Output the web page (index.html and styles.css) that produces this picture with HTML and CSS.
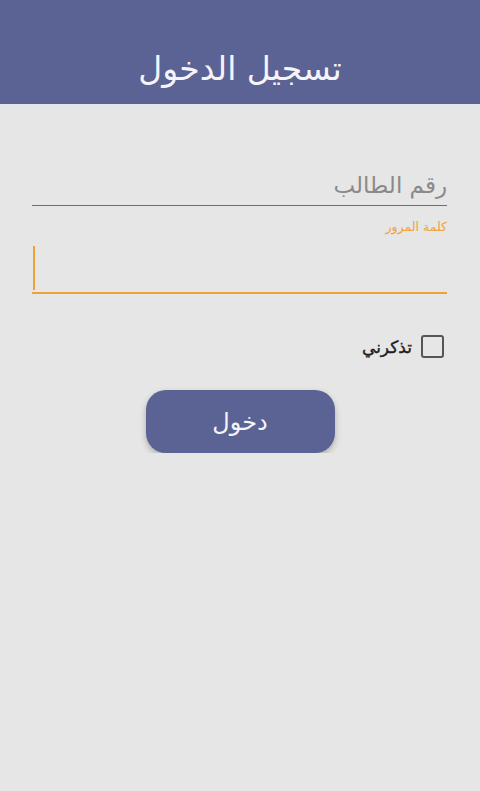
FILE: index.html
```html
<!DOCTYPE html>
<html lang="ar" dir="rtl">
<head>
<meta charset="utf-8">
<link rel="stylesheet" href="styles.css">
</head>
<body>
<header class="appbar">
  <h1 class="title">تسجيل الدخول</h1>
</header>
<main class="form">
  <div class="field">
    <div class="input placeholder">رقم الطالب</div>
  </div>
  <div class="field focused">
    <div class="label">كلمة المرور</div>
    <div class="input"><span class="caret"></span></div>
  </div>
  <label class="remember">
    <span class="box"></span>
    <span class="remember-text">تذكرني</span>
  </label>
  <div class="actions">
    <button class="btn">دخول</button>
  </div>
</main>
</body>
</html>
```
FILE: styles.css
```css
html, body {
  margin: 0;
  padding: 0;
  background: #e6e6e6;
  font-family: "DejaVu Sans", "Noto Sans", sans-serif;
}
.appbar {
  height: 104px;
  background: #5b6294;
  display: flex;
  align-items: flex-end;
  justify-content: center;
}
.title {
  margin: 0 0 15px;
  color: #f4f4fa;
  font-size: 33px;
  font-weight: normal;
  line-height: 40px;
}
.form {
  padding: 0 33px 0 32px;
}
.field {
  display: flex;
  flex-direction: column;
}
.field:first-child {
  margin-top: 60px;
}
.input {
  height: 41px;
  border-bottom: 1.5px solid #6e6e6e;
  display: flex;
  align-items: center;
  font-size: 23px;
}
.placeholder {
  color: #8a8a8a;
}
.focused .label {
  margin-top: 13px;
  color: #efa23a;
  font-size: 12.5px;
  line-height: 16px;
}
.focused .input {
  height: 51px;
  margin-top: 6px;
  border-bottom: 2.5px solid #eea137;
  direction: ltr;
}
.caret {
  width: 2px;
  height: 44px;
  background: #eea137;
  margin-left: 1px;
  margin-top: 2px;
}
.remember {
  margin-top: 41px;
  display: flex;
  align-items: center;
  gap: 9px;
  padding-right: 3px;
}
.box {
  width: 19px;
  height: 19px;
  border: 2px solid #555;
  border-radius: 3px;
}
.remember-text {
  color: #1e1e1e;
  font-size: 17px;
  font-weight: normal;
  -webkit-text-stroke: 0.4px #1e1e1e;
}
.actions {
  display: flex;
  justify-content: center;
  margin-top: 32px;
}
.btn {
  width: 189px;
  height: 63px;
  border: none;
  border-radius: 20px;
  background: #5b6294;
  color: #f4f4fa;
  font-family: "DejaVu Sans", sans-serif;
  font-size: 24px;
  box-shadow: 0 3px 6px rgba(0,0,0,0.25);
  margin-left: 1px;
}
```
